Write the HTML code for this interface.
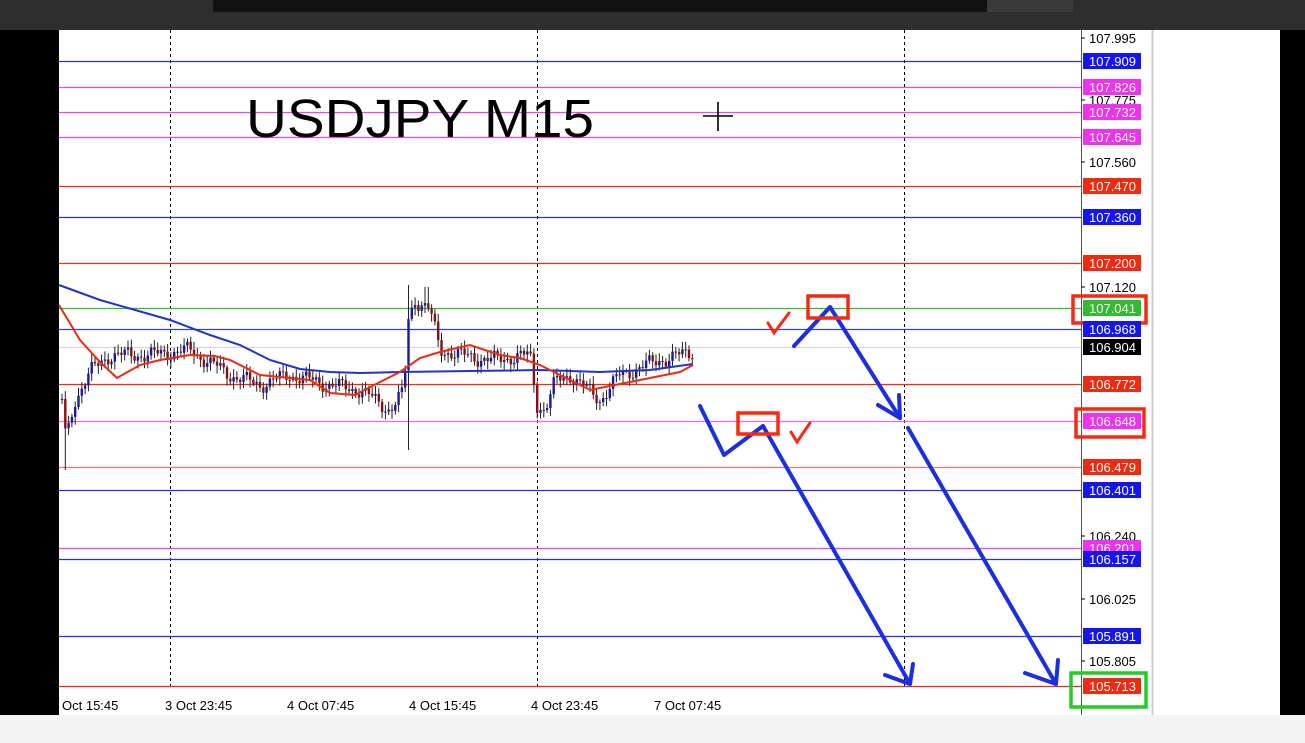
<!DOCTYPE html>
<html><head><meta charset="utf-8">
<style>
html,body{margin:0;padding:0;width:1305px;height:743px;overflow:hidden;background:#f4f4f4;font-family:"Liberation Sans",sans-serif}
</style></head><body>
<svg id="s" width="1305" height="743" xmlns="http://www.w3.org/2000/svg" font-family="Liberation Sans, sans-serif">
<rect x="0" y="0" width="1305" height="30" fill="#2e2e2e"/>
<rect x="213" y="0" width="774" height="12" fill="#111"/>
<rect x="987" y="0" width="86" height="12" fill="#3a3a3a"/>
<rect x="0" y="30" width="59" height="685" fill="#000"/>
<rect x="1280" y="30" width="25" height="685" fill="#000"/>
<rect x="59" y="30" width="1221" height="685" fill="#fff"/>
<rect x="0" y="715" width="1305" height="28" fill="#f4f4f4"/>
<line x1="1081.5" y1="30" x2="1081.5" y2="715" stroke="#555" stroke-width="1"/>
<line x1="1152.5" y1="30" x2="1152.5" y2="715" stroke="#ccc" stroke-width="2"/>
<g stroke="#000" stroke-dasharray="3,3" stroke-width="1">
<line x1="170.5" y1="30" x2="170.5" y2="690"/><line x1="537.5" y1="30" x2="537.5" y2="690"/><line x1="904.5" y1="30" x2="904.5" y2="690"/>
</g>
<g id="hl"></g>
<g id="candles"></g>
<polyline fill="none" stroke="#2233cc" stroke-width="2" points="59,285 100,300 170,320 210,335 240,345 270,360 300,369 330,372 360,373 400,372 470,371 540,370 600,372 650,370 693,364"/>
<polyline fill="none" stroke="#ee2a10" stroke-width="2" points="59,305 80,340 100,362 117,378 140,365 160,360 190,355 215,356 230,360 260,375 310,380 330,393 355,395 380,382 400,372 420,358 440,352 470,345 500,355 520,358 540,365 560,375 590,390 610,386 650,378 680,372 693,365"/>
<text x="246" y="137" font-size="54" fill="#000" textLength="348" lengthAdjust="spacingAndGlyphs">USDJPY M15</text>
<path d="M718 102V131M703 116H733" stroke="#000" stroke-width="1.6"/>
<g fill="none" stroke="#1a2fe0" stroke-width="4" stroke-linecap="round" stroke-linejoin="round">
<polyline points="794,346 830,307 900,418"/>
<polyline points="878,405 900,418 899,395"/>
<polyline points="700,406 724,455 763,426 910,684"/>
<polyline points="885,675 910,684 913,664"/>
<polyline points="908,428 1056,684"/>
<polyline points="1025,673 1056,684 1058,660"/>
</g>
<g fill="none" stroke="#f52a10" stroke-width="3.5">
<rect x="808" y="296" width="40" height="22"/>
<rect x="738" y="413" width="40" height="21"/>
<rect x="1073" y="296" width="73" height="27"/>
<rect x="1076" y="409" width="68" height="28"/>
</g>
<rect x="1071" y="673" width="75" height="34" fill="none" stroke="#22cc22" stroke-width="3.5"/>
<g fill="none" stroke="#f52a10" stroke-width="3" stroke-linecap="round">
<path d="M768 323L774 333L789 313"/>
<path d="M791 432L797 442L810 423"/>
</g>
<g id="lab" font-size="13"></g>
<g font-size="13" fill="#000">
<text x="62" y="710">Oct 15:45</text><text x="165" y="710">3 Oct 23:45</text><text x="287" y="710">4 Oct 07:45</text>
<text x="409" y="710">4 Oct 15:45</text><text x="531" y="710">4 Oct 23:45</text><text x="654" y="710">7 Oct 07:45</text>
</g>
</svg>
<script>
(function(){
var NS="http://www.w3.org/2000/svg";
function el(t,a,p){var e=document.createElementNS(NS,t);for(var k in a)e.setAttribute(k,a[k]);p.appendChild(e);return e;}
var hl=document.getElementById('hl'),lab=document.getElementById('lab');
var L=[[61,'#2233dd','107.909','#1515ee','#fff'],[87,'#ee44ee','107.826','#ee33ee','#fff'],[112,'#ee44ee','107.732','#ee33ee','#fff'],[137,'#ee44ee','107.645','#ee33ee','#fff'],
[186,'#ee2a10','107.470','#ee2a10','#fff'],[217,'#2233dd','107.360','#1515ee','#fff'],[263,'#ee2a10','107.200','#ee2a10','#fff'],[308,'#33bb33','107.041','#33bb33','#fff'],
[329,'#3344dd','106.968','#1515ee','#fff'],[347,'#d8d8d8','106.904','#000','#fff'],[384,'#ee2a10','106.772','#ee2a10','#fff'],[421,'#ee66ee','106.648','#ee33ee','#fff'],
[467,'#ee7766','106.479','#ee2a10','#fff'],[490,'#2233dd','106.401','#1515ee','#fff'],[548,'#ee44ee','106.201','#ee33ee','#fff'],[559,'#2233dd','106.157','#1515ee','#fff'],
[636,'#2233dd','105.891','#1515ee','#fff'],[686,'#ee2a10','105.713','#ee2a10','#fff']];
var P=[[38,'107.995'],[100,'107.775'],[162,'107.560'],[287,'107.120'],[536,'106.240'],[599,'106.025'],[661,'105.805']];
P.forEach(function(p){el('text',{x:1089,y:p[0]+5,fill:'#000'},lab).textContent=p[1];el('line',{x1:1081,y1:p[0],x2:1085,y2:p[0],stroke:'#000'},lab);});
L.forEach(function(l){el('line',{x1:59,y1:l[0]+.5,x2:1081,y2:l[0]+.5,stroke:l[1],'stroke-width':1.3},hl);
el('rect',{x:1083,y:l[0]-8,width:58,height:16,fill:l[3]},lab);el('text',{x:1089,y:l[0]+5,fill:l[4]},lab).textContent=l[2];});
var K=[[62,400],[66,440],[75,400],[90,372],[110,355],[150,355],[190,350],[230,375],[260,385],[290,375],[330,385],[360,390],[390,410],[404,392],[408,320],[415,300],[430,310],[440,350],[460,355],[490,360],[530,355],[537,405],[545,410],[555,382],[570,375],[600,400],[620,375],[660,360],[693,352]];
function yAt(x){for(var i=0;i<K.length-1;i++){if(x<=K[i+1][0]){var t=(x-K[i][0])/(K[i+1][0]-K[i][0]);return K[i][1]+t*(K[i+1][1]-K[i][1]);}}return K[K.length-1][1];}
var c=document.getElementById('candles'),prev=yAt(62);
for(var x=62;x<=693;x+=3.3){var y=yAt(x)+Math.sin(x*1.7)*5+Math.sin(x*0.53)*4;var o=prev,cl=y;var tp=Math.min(o,cl),bt=Math.max(o,cl);
var hi=tp-2-Math.abs(Math.sin(x*3.1))*6,lo=bt+2+Math.abs(Math.cos(x*2.3))*6;
if(Math.abs(x-407)<1.7){hi=285;lo=450;}if(x>425&&x<429)hi=287;if(x>62&&x<66)lo=470;
var col=cl<o?'#1a1aa0':'#8a1010';
el('line',{x1:x,y1:hi,x2:x,y2:lo,stroke:'#222','stroke-width':1},c);
el('rect',{x:x-1.2,y:tp,width:2.4,height:Math.max(1,bt-tp),fill:col},c);prev=cl;}
})();
</script>
</body></html>
